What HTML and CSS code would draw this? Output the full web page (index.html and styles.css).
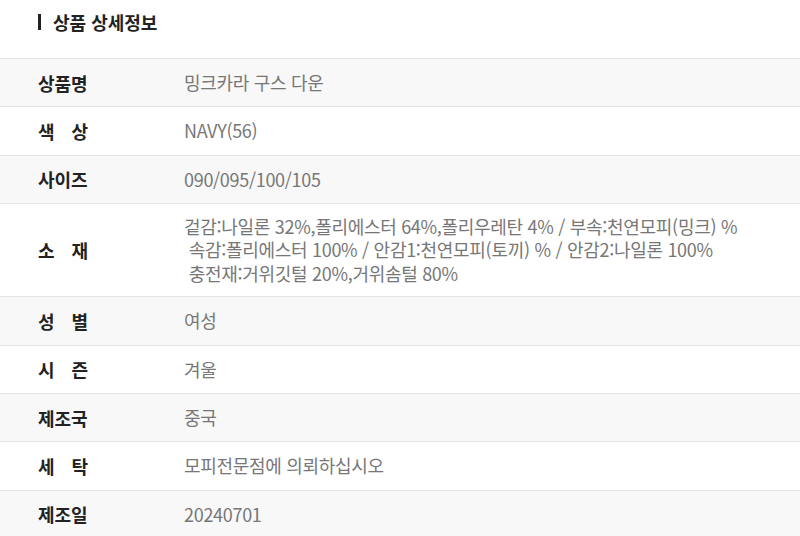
FILE: index.html
```html
<!DOCTYPE html>
<html lang="ko">
<head>
  <meta charset="utf-8">
  <title>상품 상세정보</title>
  <link rel="stylesheet" href="styles.css">
</head>
<body>
  <div class="detail">
    <h2 class="detail-title">상품 상세정보</h2>
    <table class="spec">
      <tr>
        <th><span class="label">상품명</span></th>
        <td>밍크카라 구스 다운</td>
      </tr>
      <tr>
        <th><span class="label">색 상</span></th>
        <td>NAVY(56)</td>
      </tr>
      <tr>
        <th><span class="label">사이즈</span></th>
        <td>090/095/100/105</td>
      </tr>
      <tr class="tall">
        <th><span class="label">소 재</span></th>
        <td>겉감:나일론 32%,폴리에스터 64%,폴리우레탄 4% / 부속:천연모피(밍크) %<br>&nbsp;속감:폴리에스터 100% / 안감1:천연모피(토끼) % / 안감2:나일론 100%<br>&nbsp;충전재:거위깃털 20%,거위솜털 80%</td>
      </tr>
      <tr>
        <th><span class="label">성 별</span></th>
        <td>여성</td>
      </tr>
      <tr>
        <th><span class="label">시 즌</span></th>
        <td>겨울</td>
      </tr>
      <tr>
        <th><span class="label">제조국</span></th>
        <td>중국</td>
      </tr>
      <tr>
        <th><span class="label">세 탁</span></th>
        <td>모피전문점에 의뢰하십시오</td>
      </tr>
      <tr>
        <th><span class="label">제조일</span></th>
        <td>20240701</td>
      </tr>
    </table>
  </div>
</body>
</html>
```

FILE: styles.css
```css
body {
  margin: 0;
  background: #fff;
  font-family: "Noto Sans CJK KR", "Noto Sans", sans-serif;
  color: #222;
}

.detail {
  width: 800px;
}

.detail-title {
  display: flex;
  align-items: center;
  gap: 12px;
  margin: 0;
  padding: 0 0 0 38px;
  height: 44px;
  font-size: 18px;
  font-weight: 700;
  letter-spacing: 0;
  color: #222;
}

.detail-title::before {
  content: "";
  width: 3px;
  height: 16px;
  background: #222;
}

.spec {
  width: 100%;
  margin-top: 14px;
  border-collapse: collapse;
  table-layout: fixed;
  border-top: 1px solid #e4e4e4;
}

.spec tr {
  height: 48.4px;
  border-bottom: 1px solid #e4e4e4;
}

.spec tr:nth-child(odd) {
  background: #f8f8f8;
}

.spec tr.tall {
  height: 93px;
}

.spec th {
  width: 146px;
  padding: 0 0 0 38px;
  text-align: left;
  vertical-align: middle;
  font-size: 18px;
  font-weight: 700;
  color: #222;
}

.spec .label {
  display: inline-block;
  width: 50px;
  text-align: justify;
  text-align-last: justify;
}

.spec td {
  padding: 0;
  vertical-align: middle;
  font-size: 18px;
  line-height: 23.5px;
  letter-spacing: -0.3px;
  color: #777;
}
```
